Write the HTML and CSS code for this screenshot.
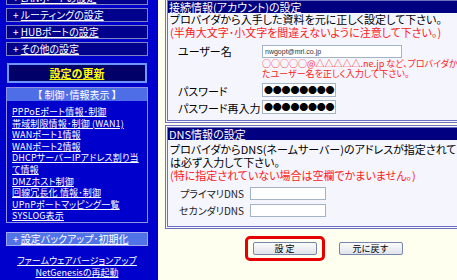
FILE: index.html
```html
<!DOCTYPE html>
<html lang="ja">
<head>
    <meta charset="UTF-8">
    <title>接続情報の設定</title>
    <link rel="stylesheet" href="styles.css">
</head>
<body>
    <div class="sidebar">
        <div class="menu-box">+ <a href="#">LANポートの設定</a></div>
        <div class="menu-box">+ <a href="#">ルーティングの設定</a></div>
        <div class="menu-box">+ <a href="#">HUBポートの設定</a></div>
        <div class="menu-box">+ <a href="#">その他の設定</a></div>

        <div class="update-box"><a href="#">設定の更新</a></div>

        <div class="info-box">
            <div class="info-title">【 制御･情報表示 】</div>
            <ul class="info-links">
                <li><a href="#">PPPoEポート情報･制御</a></li>
                <li><a href="#">帯域制限情報･制御 (WAN1)</a></li>
                <li><a href="#">WANポート1情報</a></li>
                <li><a href="#">WANポート2情報</a></li>
                <li><a href="#">DHCPサーバーIPアドレス割り当て情報</a></li>
                <li><a href="#">DMZホスト制御</a></li>
                <li><a href="#">回線冗長化 情報･制御</a></li>
                <li><a href="#">UPnPポートマッピング一覧</a></li>
                <li><a href="#">SYSLOG表示</a></li>
            </ul>
        </div>

        <div class="menu-box backup">+ <a href="#">設定バックアップ･初期化</a></div>

        <div class="bottom-links">
            <a href="#">ファームウェアバージョンアップ</a>
            <a href="#">NetGenesisの再起動</a>
        </div>
    </div>

    <div class="content">
        <div class="panel account">
            <div class="panel-title">接続情報(アカウント)の設定</div>
            <div class="panel-body">
                <p>プロバイダから入手した資料を元に正しく設定して下さい。<br>
                <span class="warn">(半角大文字･小文字を間違えないように注意して下さい。)</span></p>

                <div class="field-grid">
                    <label>ユーザー名</label>
                    <div class="text-box user">nwgopt@mrl.co.jp</div>
                    <div class="note">○○○○○@△△△△△.ne.jp など、プロバイダから指定され<br>たユーザー名を正しく入力して下さい。</div>
                    <label>パスワード</label>
                    <div class="text-box pass">●●●●●●●●</div>
                    <label>パスワード再入力</label>
                    <div class="text-box pass">●●●●●●●●</div>
                </div>
            </div>
        </div>

        <div class="panel dns">
            <div class="panel-title">DNS情報の設定</div>
            <div class="panel-body">
                <p>プロバイダからDNS(ネームサーバー)のアドレスが指定されている場合<br>
                は必ず入力して下さい。<br>
                <span class="warn">(特に指定されていない場合は空欄でかまいません。)</span></p>

                <div class="dns-grid">
                    <label>プライマリDNS</label>
                    <div class="text-box dns-box"></div>
                    <label>セカンダリDNS</label>
                    <div class="text-box dns-box"></div>
                </div>
            </div>
        </div>

        <div class="button-row">
            <span class="highlight"><button class="btn">設 定</button></span>
            <button class="btn">元に戻す</button>
        </div>
    </div>
</body>
</html>
```

FILE: styles.css
```css
body {
    margin: 0;
    padding: 0;
    width: 457px;
    height: 280px;
    overflow: hidden;
    display: flex;
    align-items: flex-start;
    background-color: #fffff0;
    font-family: "Noto Sans CJK JP", sans-serif;
    font-feature-settings: "palt";
    color: #000;
}
a {
    color: #fff;
}

/* left menu */
.sidebar {
    flex: none;
    width: 142px;
    height: 289px;
    padding: 0 10px 0 6px;
    margin-top: -9px;
    background-color: #0000cc;
    display: flex;
    flex-direction: column;
}
.menu-box {
    height: 14px;
    box-sizing: border-box;
    margin-bottom: 3px;
    padding-left: 6px;
    border: 1px solid #8282c4;
    background-color: #00008c;
    color: #fff;
    font-size: 10px;
    line-height: 12px;
    white-space: nowrap;
}
.update-box {
    height: 20px;
    box-sizing: border-box;
    margin: 4px 1px 0 1px;
    border: 2px solid #6e98ff;
    background-color: #000068;
    text-align: center;
    font-size: 11px;
    font-weight: bold;
    line-height: 16px;
}
.update-box a {
    color: #ffff00;
}
.info-box {
    margin-top: 4px;
    height: 136px;
    box-sizing: border-box;
    border: 1px solid #9292e6;
}
.info-title {
    height: 13px;
    background-color: #4e6ee8;
    color: #fff;
    text-align: center;
    font-size: 10px;
    line-height: 13px;
}
.info-links {
    list-style: none;
    margin: 0;
    padding: 5px 0 0 5px;
    font-size: 9px;
    line-height: 11.6px;
    letter-spacing: 0.15px;
}
.menu-box.backup {
    margin-top: 9px;
    background-color: #5074e8;
    border-color: #a2a8f2;
}
.bottom-links {
    margin-top: 6px;
    display: flex;
    flex-direction: column;
    align-items: center;
    font-size: 9px;
    line-height: 12px;
}

/* main area */
.content {
    flex: none;
    width: 317px;
    margin: -2px 0 0 7px;
}
.panel {
    border: 3px double #7070c0;
    background-color: #f5f5fd;
}
.panel.dns {
    margin-top: 2px;
}
.panel-title {
    height: 12px;
    padding-left: 1px;
    background-color: #000080;
    color: #fff;
    font-size: 11px;
    line-height: 12px;
    white-space: nowrap;
}
.panel-body {
    padding: 0 0 3px 2px;
    font-size: 11px;
    line-height: 13px;
    white-space: nowrap;
}
.panel-body p {
    margin: 0;
}
.warn {
    color: #ff1a1a;
}
.field-grid {
    display: grid;
    grid-template-columns: 84px auto;
    align-items: center;
    margin: 6px 0 0 8px;
}
.field-grid label {
    line-height: 13px;
}
.text-box {
    box-sizing: border-box;
    height: 13px;
    border: 1px solid #a4b4c8;
    background-color: #fff;
}
.text-box.user {
    width: 140px;
    padding-left: 2px;
    font-family: "Liberation Sans", sans-serif;
    font-size: 7px;
    line-height: 11px;
    color: #333;
}
.note {
    grid-column: 2;
    margin: 1px 0 4px 0;
    color: #ff1a1a;
    font-size: 9px;
    line-height: 10px;
}
.text-box.pass {
    width: 74px;
    height: 14px;
    margin-bottom: 3px;
    padding-left: 1px;
    font-size: 9px;
    line-height: 12px;
    letter-spacing: -0.2px;
    overflow: hidden;
}
.panel.dns .panel-body {
    padding: 3px 0 9px 2px;
}
.dns-grid {
    display: grid;
    grid-template-columns: 72px 76px;
    column-gap: 6px;
    row-gap: 4px;
    align-items: center;
    margin: 5px 0 0 2px;
}
.dns-grid label {
    text-align: right;
    font-size: 10px;
    color: #222;
}
.button-row {
    margin-top: 7px;
    display: flex;
    justify-content: center;
    align-items: center;
    gap: 14px;
}
.highlight {
    display: inline-block;
    padding: 3px 5px;
    border: 3px solid #e60000;
    border-radius: 5px;
}
.btn {
    display: block;
    width: 64px;
    height: 13px;
    padding: 0;
    border: 1px solid #7587a8;
    border-radius: 2px;
    background: linear-gradient(#fbfbfb, #e0e3ea);
    font-family: "Noto Sans CJK JP", sans-serif;
    font-size: 9px;
    line-height: 11px;
    color: #000;
}
```
